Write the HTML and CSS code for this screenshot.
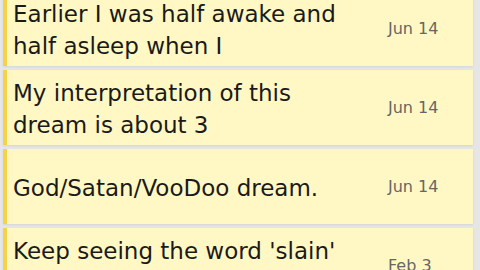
FILE: index.html
```html
<!DOCTYPE html>
<html lang="en">
<head>
    <meta charset="UTF-8">
    <meta name="viewport" content="width=device-width, initial-scale=1.0">
    <title>Dream Journal</title>
    <link rel="stylesheet" href="styles.css">
</head>
<body>

    <div class="dream-list">
        <div class="dream-card">
            <div class="dream-title">Earlier I was half awake and half asleep when I</div>
            <div class="dream-date">Jun 14</div>
        </div>
        <div class="dream-card">
            <div class="dream-title">My interpretation of this dream is about 3</div>
            <div class="dream-date">Jun 14</div>
        </div>
        <div class="dream-card">
            <div class="dream-title">God/Satan/VooDoo dream.</div>
            <div class="dream-date">Jun 14</div>
        </div>
        <div class="dream-card">
            <div class="dream-title">Keep seeing the word 'slain' in my sleep</div>
            <div class="dream-date">Feb 3</div>
        </div>
    </div>

</body>
</html>
```
FILE: styles.css
```css
body {
    margin: 0;
    background: #e6e6e6;
    font-family: "DejaVu Sans", sans-serif;
    overflow: hidden;
}
.dream-list {
    display: flex;
    flex-direction: column;
    gap: 4px;
    margin: -9px 7px 0 3px;
}
.dream-card {
    display: flex;
    align-items: center;
    min-height: 75px;
    box-sizing: border-box;
    background: #fff8c4;
    border-left: 4px solid #f5d247;
    padding: 0 35px 0 6px;
    box-shadow: 0 1px 2px rgba(0, 0, 0, 0.08);
}
.dream-title {
    flex: 1;
    padding-top: 3px;
    padding-right: 33px;
    font-size: 23px;
    line-height: 32px;
    color: #1a1a1a;
}
.dream-date {
    flex: none;
    width: 50px;
    white-space: nowrap;
    font-size: 16px;
    color: #666666;
}
```
